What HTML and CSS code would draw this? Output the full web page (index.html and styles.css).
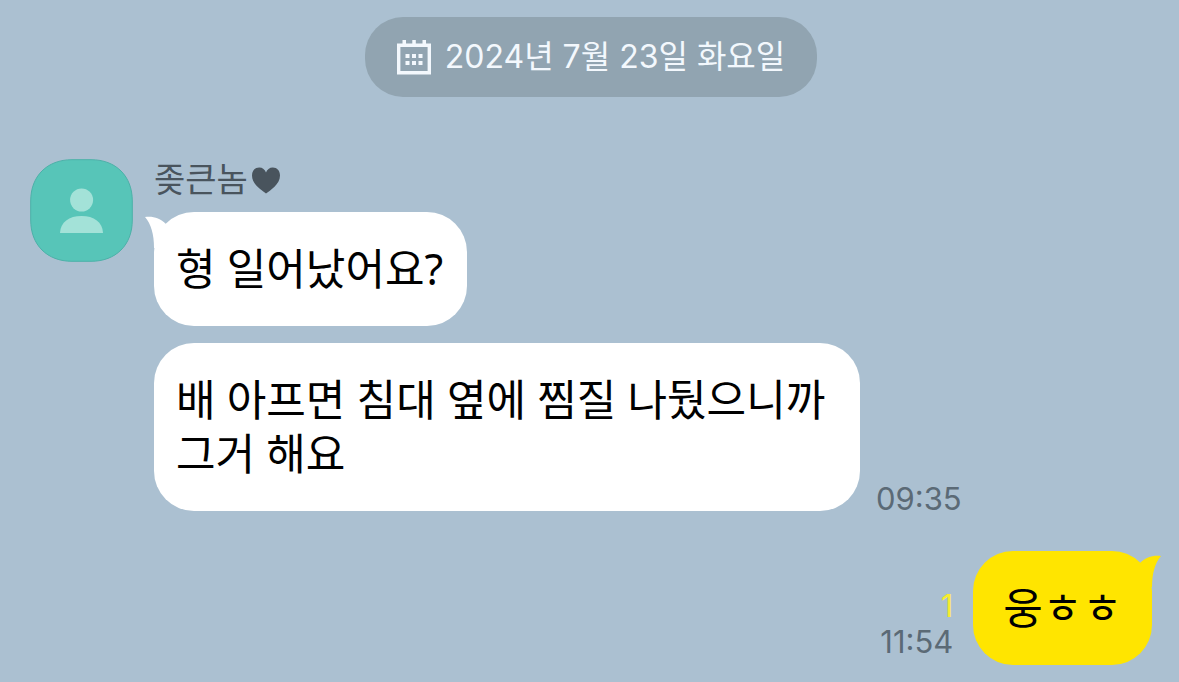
FILE: index.html
```html
<!DOCTYPE html>
<html lang="ko">
<head>
    <meta charset="UTF-8">
    <meta name="viewport" content="width=device-width, initial-scale=1">
    <title>채팅</title>
    <link rel="stylesheet" href="styles.css">
</head>
<body>
    <main class="chat">
        <div class="date">
            <svg class="date-icon" viewBox="0 0 34 35" aria-hidden="true">
                <path d="M1.700 5.200H32.300V32.800H1.700Z" fill="none" stroke="currentColor" stroke-width="3.400"/>
                <path d="M5.500 0H9V4H5.500ZM15.300 0H18.800V4H15.300ZM25.500 0H29V4H25.500Z" fill="currentColor"/>
                <path d="M8.500 14h4v4h-4ZM15 14h4v4h-4ZM21.500 14h4v4h-4ZM8.500 21h4v4h-4ZM15 21h4v4h-4ZM21.500 21h4v4h-4Z" fill="currentColor"/>
            </svg>
            <time datetime="2024-07-23">2024년 7월 23일 화요일</time>
        </div>

        <section class="received">
            <svg class="avatar" viewBox="0 0 103 103" aria-hidden="true">
                <path class="avatar-bg" d="M42 .7H61C86 .7 102.300 17 102.300 42V61C102.300 86 86 102.300 61 102.300H42C17 102.300 .7 86 .7 61V42C.7 17 17 .7 42 .7Z"/>
                <circle class="avatar-person" cx="51.600" cy="41" r="11.500"/>
                <path class="avatar-person" d="M30 74C30.500 63 39 57 51.500 57S72.500 63 73 74Z"/>
            </svg>
            <div class="messages">
                <div class="name">
                    <span>좆큰놈</span>
                    <svg class="heart" viewBox="0 0 28 27" aria-hidden="true">
                        <path d="M14 26.500C10 23.500 0 17.500 0 8.500C0 3.500 3 .5 7.200 .5C10.500 .5 13 2.500 14 5.500C15 2.500 17.500 .5 20.800 .5C25 .5 28 3.500 28 8.500C28 17.500 18 23.500 14 26.500Z" fill="currentColor"/>
                    </svg>
                </div>
                <div class="row">
                    <p class="bubble">
                        <svg class="tail" viewBox="0 0 36 36" aria-hidden="true"><path d="M0 5C8 4 15 6 21 12L36 36H9C9 22 6 12 0 5Z" fill="currentColor"/></svg>
                        형 일어났어요?
                    </p>
                </div>
                <div class="row">
                    <p class="bubble">배 아프면 침대 옆에 찜질 나뒀으니까 그거 해요</p>
                    <div class="info"><time>09:35</time></div>
                </div>
            </div>
        </section>

        <section class="row sent">
            <div class="info"><span class="unread">1</span><time>11:54</time></div>
            <p class="bubble">
                <svg class="tail" viewBox="0 0 36 36" aria-hidden="true"><path d="M0 5C8 4 15 6 21 12L36 36H9C9 22 6 12 0 5Z" fill="currentColor"/></svg>
                웅ㅎㅎ
            </p>
        </section>
    </main>
</body>
</html>
```
FILE: styles.css
```css
body,p{margin:0;padding:0;}
body{background:#abc0d1;color:#000;font-family:Inter,"Noto Sans CJK KR",sans-serif;}
svg{display:block;flex:none;}
.chat{display:flex;flex-direction:column;padding:17px 27px 17px 30px;}

.date{display:flex;align-items:center;align-self:center;gap:14px;height:80px;padding:0 32px;border-radius:38px;background:#91a4b1;color:#f3f8fd;font-size:32px;line-height:40px;white-space:nowrap;}
.date-icon{width:34px;height:35px;}

.received{display:flex;align-items:flex-start;gap:21px;margin-top:62px;}
.avatar{width:103px;height:103px;}
.avatar-bg{fill:#57c5b8;stroke:#4cb1a8;stroke-width:1;}
.avatar-person{fill:#a3e2d8;}
.messages{display:flex;flex-direction:column;gap:17px;min-width:0;}
.name{display:flex;align-items:center;gap:4px;height:42px;margin-bottom:-6px;color:#49545d;font-size:34px;line-height:42px;}
.heart{width:28px;height:27px;}

.row{display:flex;align-items:flex-end;gap:16px;}
.bubble{position:relative;box-sizing:border-box;max-width:706px;padding:30px 24px 30px 22px;border-radius:40px;background:#fff;font-family:"Noto Sans","Noto Sans CJK KR",sans-serif;font-size:43px;line-height:54px;word-break:keep-all;}
.tail{position:absolute;top:0;left:-9px;width:36px;height:36px;color:#fff;}
.info{display:flex;flex-direction:column;align-items:flex-end;gap:12px;color:#5b6a76;font-size:31px;line-height:24px;}
.unread{color:#f7ec2e;}

.sent{justify-content:flex-end;gap:20px;margin-top:40px;}
.sent .bubble{padding:30px;background:#ffe500;}
.sent .info{padding-bottom:11px;}
.sent .tail{right:-9px;left:auto;color:#ffe500;transform:scaleX(-1);}
```
